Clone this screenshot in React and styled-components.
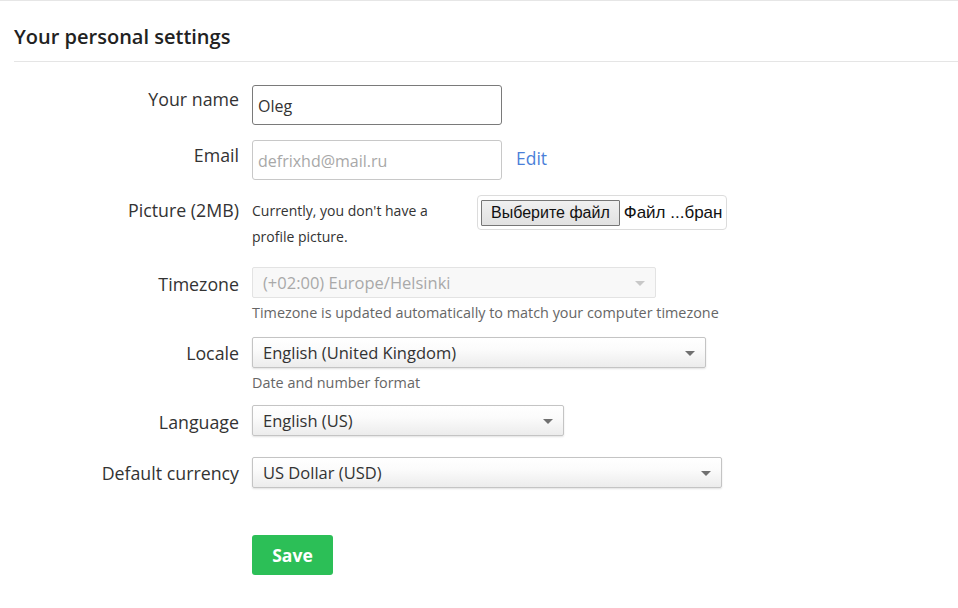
import React from 'react'
import styled, { createGlobalStyle } from 'styled-components'

const Global = createGlobalStyle`
  body {
    margin: 0;
    background: #fff;
    font-family: "Open Sans", "Noto Sans", sans-serif;
    color: #333;
  }
`

const Page = styled.div`
  border-top: 1px solid #e6e6e6;
  padding: 0 0 0 14px;
`

const Title = styled.h2`
  margin: 0;
  height: 61px;
  display: flex;
  align-items: center;
  padding-top: 10px;
  box-sizing: border-box;
  font-size: 20px;
  font-weight: 600;
  color: #222;
  border-bottom: 1px solid #e5e5e5;
`

const Form = styled.div`
  padding-top: 23px;
`

const Row = styled.div`
  display: grid;
  grid-template-columns: 225px 1fr;
  column-gap: 13px;
  min-height: ${p => p.$h}px;
  align-items: start;
`

const Label = styled.div`
  text-align: right;
  font-size: 17.8px;
  line-height: 24px;
  color: #333;
  padding-top: ${p => p.$top}px;
`

const Field = styled.div`
  display: flex;
  align-items: ${p => p.$align || 'center'};
  gap: ${p => p.$gap || 0}px;
`

const Input = styled.input`
  width: 250px;
  height: 40px;
  box-sizing: border-box;
  border: 1px solid ${p => (p.$muted ? '#c8c8c8' : '#7a7a7a')};
  border-radius: 3px;
  padding: 2px 5px 0;
  font-family: "Open Sans", sans-serif;
  font-size: 16px;
  color: #333;
  outline: none;
  &::placeholder {
    color: #a8a8a8;
  }
`

const Link = styled.a`
  color: #4b7fd9;
  font-size: 17.5px;
  text-decoration: none;
  margin-top: -4px;
`

const Note = styled.div`
  font-size: 14px;
  line-height: 26px;
  color: #333;
  width: 200px;
  margin: 3px 25px 0 0;
`

const FileBox = styled.div`
  display: flex;
  align-items: center;
  width: 250px;
  height: 35px;
  box-sizing: border-box;
  border: 1px solid #dcdcdc;
  border-radius: 4px;
  padding: 0 3px;
  font-family: "Liberation Sans", Arial, sans-serif;
  font-size: 17px;
  color: #111;
  white-space: nowrap;
`

const FileButton = styled.button`
  height: 26px;
  padding: 0 9px;
  margin-right: 4px;
  border: 1px solid #767676;
  border-radius: 1px;
  background: linear-gradient(#f0f0f0, #e1e1e1);
  font-family: "Liberation Sans", Arial, sans-serif;
  font-size: 16px;
  color: #111;
`

const Stack = styled.div`
  display: flex;
  flex-direction: column;
`

const Select = styled.div`
  position: relative;
  width: ${p => p.$w}px;
  height: 31px;
  box-sizing: border-box;
  display: flex;
  align-items: center;
  padding: 0 10px;
  border: 1px solid ${p => (p.$disabled ? '#e3e3e3' : '#c4c4c4')};
  border-radius: 2px;
  background: ${p =>
    p.$disabled ? '#f8f8f8' : 'linear-gradient(#ffffff 0%, #fbfbfb 40%, #ececec 100%)'};
  box-shadow: ${p => (p.$disabled ? 'none' : '0 1px 2px rgba(0,0,0,0.12)')};
  font-size: 16.5px;
  color: ${p => (p.$disabled ? '#a9a9a9' : '#333')};
`

const Caret = styled.span`
  position: absolute;
  right: 10px;
  top: 50%;
  margin-top: -2px;
  width: 0;
  height: 0;
  border-left: 5px solid transparent;
  border-right: 5px solid transparent;
  border-top: 5px solid ${p => (p.$disabled ? '#c8c8c8' : '#707070')};
`

const Help = styled.div`
  font-size: 14.4px;
  line-height: 20px;
  color: #666;
  margin-top: 5px;
`

const SaveButton = styled.button`
  width: 81px;
  height: 40px;
  border: none;
  border-radius: 3px;
  background: #2cbf57;
  color: #fff;
  font-family: "Open Sans", sans-serif;
  font-weight: 700;
  font-size: 17.5px;
`

function Dropdown({ width, disabled, children }) {
  return (
    <Select $w={width} $disabled={disabled}>
      {children}
      <Caret $disabled={disabled} />
    </Select>
  )
}

export default function App() {
  return (
    <>
      <Global />
      <Page>
        <Title>Your personal settings</Title>
        <Form>
          <Row $h={55}>
            <Label $top={2}>Your name</Label>
            <Field>
              <Input defaultValue="Oleg" />
            </Field>
          </Row>
          <Row $h={55}>
            <Label $top={3}>Email</Label>
            <Field $gap={14}>
              <Input $muted placeholder="defrixhd@mail.ru" />
              <Link>Edit</Link>
            </Field>
          </Row>
          <Row $h={72}>
            <Label $top={3}>Picture (2MB)</Label>
            <Field $align="flex-start">
              <Note>Currently, you don't have a profile picture.</Note>
              <FileBox>
                <FileButton>Выберите файл</FileButton>
                Файл ...бран
              </FileBox>
            </Field>
          </Row>
          <Row $h={70}>
            <Label $top={5}>Timezone</Label>
            <Stack>
              <Dropdown width={404} disabled>(+02:00) Europe/Helsinki</Dropdown>
              <Help>Timezone is updated automatically to match your computer timezone</Help>
            </Stack>
          </Row>
          <Row $h={68}>
            <Label $top={4}>Locale</Label>
            <Stack>
              <Dropdown width={454}>English (United Kingdom)</Dropdown>
              <Help>Date and number format</Help>
            </Stack>
          </Row>
          <Row $h={52}>
            <Label $top={5}>Language</Label>
            <Stack>
              <Dropdown width={312}>English (US)</Dropdown>
            </Stack>
          </Row>
          <Row $h={78}>
            <Label $top={4}>Default currency</Label>
            <Stack>
              <Dropdown width={470}>US Dollar (USD)</Dropdown>
            </Stack>
          </Row>
          <Row>
            <div />
            <div>
              <SaveButton>Save</SaveButton>
            </div>
          </Row>
        </Form>
      </Page>
    </>
  )
}
